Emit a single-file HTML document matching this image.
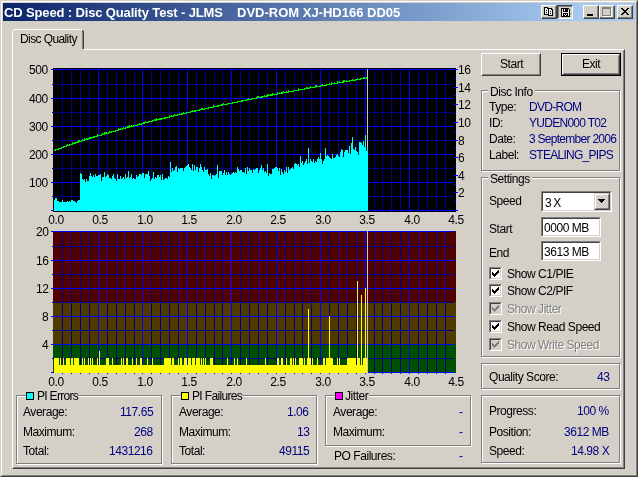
<!DOCTYPE html><html><head><meta charset="utf-8"><style>html,body{margin:0;padding:0;width:638px;height:477px;overflow:hidden;background:#D4D0C8;}body{position:relative;font-family:"Liberation Sans",sans-serif;font-size:12px;letter-spacing:-0.45px;}.t{position:absolute;white-space:nowrap;line-height:12px;will-change:transform;}.box{position:absolute;box-sizing:border-box;}</style></head><body><div class="box" style="left:0px;top:0px;width:638px;height:477px;border-style:solid;border-width:1px;border-color:#D4D0C8 #404040 #404040 #D4D0C8"><div class="box" style="left:0;top:0;width:636px;height:475px;border-style:solid;border-width:1px;border-color:#FFFFFF #808080 #808080 #FFFFFF"></div></div><div class="box" style="left:3px;top:3px;width:632px;height:18px;background:linear-gradient(to right,#0A246A 0px,#A6CAF0 580px,#A6CAF0 632px)"></div><div class="t" style="left:4px;top:6px;color:#fff;font-weight:bold;font-size:13px;line-height:13px;letter-spacing:-0.14px">CD Speed : Disc Quality Test - JLMS</div><div class="t" style="left:237px;top:6px;color:#fff;font-weight:bold;font-size:13px;line-height:13px;letter-spacing:0px">DVD-ROM XJ-HD166 DD05</div><div class="box" style="left:541px;top:5px;width:16px;height:14px;background:#D4D0C8;border-style:solid;border-width:1px;border-color:#FFFFFF #404040 #404040 #FFFFFF"><div class="box" style="left:0;top:0;width:14px;height:12px;border-style:solid;border-width:0 1px 1px 0;border-color:#808080"></div><svg width="16" height="14" style="position:absolute;left:-1px;top:-1px" shape-rendering="crispEdges"><rect x="3" y="2" width="5" height="8" fill="#000"/><rect x="4" y="3" width="3" height="6" fill="#F4F4F4"/><rect x="7" y="2" width="1" height="1" fill="#D4D0C8"/><rect x="6" y="3" width="1" height="1" fill="#000"/><rect x="5" y="5" width="1" height="1" fill="#000"/><rect x="5" y="7" width="1" height="1" fill="#000"/><rect x="7" y="3" width="5" height="8" fill="#000"/><rect x="8" y="4" width="3" height="6" fill="#F4F4F4"/><rect x="11" y="3" width="1" height="1" fill="#D4D0C8"/><rect x="10" y="4" width="1" height="1" fill="#000"/><rect x="9" y="6" width="1" height="1" fill="#000"/><rect x="9" y="8" width="1" height="1" fill="#000"/></svg></div><div class="box" style="left:557px;top:5px;width:16px;height:14px;background:#D4D0C8;border-style:solid;border-width:1px;border-color:#404040 #FFFFFF #FFFFFF #404040"><div class="box" style="left:0;top:0;width:14px;height:12px;border-style:solid;border-width:1px 0 0 1px;border-color:#808080"></div><svg width="16" height="14" style="position:absolute;left:-1px;top:-1px" shape-rendering="crispEdges"><rect x="4" y="3" width="9" height="9" fill="#000"/><rect x="12" y="3" width="1" height="1" fill="#D4D0C8"/><rect x="5" y="4" width="1" height="7" fill="#F4F4F4"/><rect x="11" y="4" width="1" height="7" fill="#F4F4F4"/><rect x="5" y="7" width="7" height="1" fill="#F4F4F4"/><rect x="7" y="4" width="1" height="2" fill="#F4F4F4"/><rect x="7" y="9" width="1" height="1" fill="#F4F4F4"/><rect x="8" y="10" width="1" height="1" fill="#F4F4F4"/><rect x="9" y="9" width="1" height="1" fill="#F4F4F4"/></svg></div><div class="box" style="left:583px;top:5px;width:16px;height:14px;background:#D4D0C8;border-style:solid;border-width:1px;border-color:#FFFFFF #404040 #404040 #FFFFFF"><div class="box" style="left:0;top:0;width:14px;height:12px;border-style:solid;border-width:0 1px 1px 0;border-color:#808080"></div><svg width="16" height="14" style="position:absolute;left:-1px;top:-1px" shape-rendering="crispEdges"><rect x="4" y="9" width="6" height="2" fill="#000"/></svg></div><div class="box" style="left:599px;top:5px;width:16px;height:14px;background:#D4D0C8;border-style:solid;border-width:1px;border-color:#FFFFFF #404040 #404040 #FFFFFF"><div class="box" style="left:0;top:0;width:14px;height:12px;border-style:solid;border-width:0 1px 1px 0;border-color:#808080"></div><svg width="16" height="14" style="position:absolute;left:-1px;top:-1px" shape-rendering="crispEdges"><rect x="3" y="2" width="9" height="9" fill="#808080"/><rect x="4" y="4" width="7" height="6" fill="#D4D0C8"/><rect x="4" y="11" width="9" height="1" fill="#FFFFFF"/><rect x="12" y="3" width="1" height="9" fill="#FFFFFF"/></svg></div><div class="box" style="left:617px;top:5px;width:16px;height:14px;background:#D4D0C8;border-style:solid;border-width:1px;border-color:#FFFFFF #404040 #404040 #FFFFFF"><div class="box" style="left:0;top:0;width:14px;height:12px;border-style:solid;border-width:0 1px 1px 0;border-color:#808080"></div><svg width="16" height="14" style="position:absolute;left:-1px;top:-1px" shape-rendering="crispEdges"><path d="M4 3h2v1h1v1h2V4h1V3h2v1h-1v1h-1v1h-1v1h1v1h1v1h1v1h-2V9h-1V8H7v1H6v1H4V9h1V8h1V7h1V6H6V5H5V4H4z" fill="#000"/></svg></div><div class="box" style="left:12px;top:49px;width:613px;height:420px;border-style:solid;border-width:1px;border-color:#FFFFFF #404040 #404040 #FFFFFF"><div class="box" style="left:0;top:0;width:611px;height:418px;border-style:solid;border-width:1px;border-color:#D4D0C8 #808080 #808080 #D4D0C8"></div></div><div class="box" style="left:12px;top:29px;width:72px;height:21px;background:#D4D0C8"></div><div class="box" style="left:14px;top:29px;width:68px;height:1px;background:#FFFFFF"></div><div class="box" style="left:13px;top:30px;width:1px;height:1px;background:#FFFFFF"></div><div class="box" style="left:12px;top:31px;width:1px;height:19px;background:#FFFFFF"></div><div class="box" style="left:82px;top:31px;width:1px;height:18px;background:#808080"></div><div class="box" style="left:83px;top:31px;width:1px;height:18px;background:#404040"></div><div class="box" style="left:82px;top:30px;width:1px;height:1px;background:#404040"></div><div class="t" style="left:20px;top:33px;color:#000;letter-spacing:-0.6px">Disc Quality</div><svg width="638" height="477" style="position:absolute;left:0;top:0" shape-rendering="crispEdges"><rect x="53" y="68" width="403" height="144" fill="#000000"/><rect x="62" y="69" width="1" height="143" fill="#000088"/><rect x="71" y="69" width="1" height="143" fill="#000088"/><rect x="80" y="69" width="1" height="143" fill="#000088"/><rect x="89" y="69" width="1" height="143" fill="#000088"/><rect x="98" y="69" width="1" height="143" fill="#0000FF"/><rect x="107" y="69" width="1" height="143" fill="#000088"/><rect x="116" y="69" width="1" height="143" fill="#000088"/><rect x="125" y="69" width="1" height="143" fill="#000088"/><rect x="134" y="69" width="1" height="143" fill="#000088"/><rect x="142" y="69" width="1" height="143" fill="#0000FF"/><rect x="151" y="69" width="1" height="143" fill="#000088"/><rect x="160" y="69" width="1" height="143" fill="#000088"/><rect x="169" y="69" width="1" height="143" fill="#000088"/><rect x="178" y="69" width="1" height="143" fill="#000088"/><rect x="187" y="69" width="1" height="143" fill="#0000FF"/><rect x="196" y="69" width="1" height="143" fill="#000088"/><rect x="205" y="69" width="1" height="143" fill="#000088"/><rect x="214" y="69" width="1" height="143" fill="#000088"/><rect x="222" y="69" width="1" height="143" fill="#000088"/><rect x="231" y="69" width="1" height="143" fill="#0000FF"/><rect x="240" y="69" width="1" height="143" fill="#000088"/><rect x="249" y="69" width="1" height="143" fill="#000088"/><rect x="258" y="69" width="1" height="143" fill="#000088"/><rect x="267" y="69" width="1" height="143" fill="#000088"/><rect x="276" y="69" width="1" height="143" fill="#0000FF"/><rect x="285" y="69" width="1" height="143" fill="#000088"/><rect x="294" y="69" width="1" height="143" fill="#000088"/><rect x="302" y="69" width="1" height="143" fill="#000088"/><rect x="311" y="69" width="1" height="143" fill="#000088"/><rect x="320" y="69" width="1" height="143" fill="#0000FF"/><rect x="329" y="69" width="1" height="143" fill="#000088"/><rect x="338" y="69" width="1" height="143" fill="#000088"/><rect x="347" y="69" width="1" height="143" fill="#000088"/><rect x="356" y="69" width="1" height="143" fill="#000088"/><rect x="365" y="69" width="1" height="143" fill="#0000FF"/><rect x="374" y="69" width="1" height="143" fill="#000088"/><rect x="382" y="69" width="1" height="143" fill="#000088"/><rect x="391" y="69" width="1" height="143" fill="#000088"/><rect x="400" y="69" width="1" height="143" fill="#000088"/><rect x="409" y="69" width="1" height="143" fill="#0000FF"/><rect x="418" y="69" width="1" height="143" fill="#000088"/><rect x="427" y="69" width="1" height="143" fill="#000088"/><rect x="436" y="69" width="1" height="143" fill="#000088"/><rect x="445" y="69" width="1" height="143" fill="#000088"/><rect x="51" y="210" width="403" height="1" fill="#0000FF"/><rect x="52" y="196" width="402" height="1" fill="#000088"/><rect x="51" y="182" width="403" height="1" fill="#0000FF"/><rect x="52" y="168" width="402" height="1" fill="#000088"/><rect x="51" y="154" width="403" height="1" fill="#0000FF"/><rect x="52" y="140" width="402" height="1" fill="#000088"/><rect x="51" y="126" width="403" height="1" fill="#0000FF"/><rect x="52" y="112" width="402" height="1" fill="#000088"/><rect x="51" y="98" width="403" height="1" fill="#0000FF"/><rect x="52" y="84" width="402" height="1" fill="#000088"/><rect x="51" y="69" width="403" height="1" fill="#0000FF"/><rect x="454" y="210" width="4" height="1" fill="#0000FF"/><rect x="454" y="201" width="2" height="1" fill="#0000FF"/><rect x="454" y="192" width="4" height="1" fill="#0000FF"/><rect x="454" y="184" width="2" height="1" fill="#0000FF"/><rect x="454" y="175" width="4" height="1" fill="#0000FF"/><rect x="454" y="166" width="2" height="1" fill="#0000FF"/><rect x="454" y="157" width="4" height="1" fill="#0000FF"/><rect x="454" y="148" width="2" height="1" fill="#0000FF"/><rect x="454" y="140" width="4" height="1" fill="#0000FF"/><rect x="454" y="131" width="2" height="1" fill="#0000FF"/><rect x="454" y="122" width="4" height="1" fill="#0000FF"/><rect x="454" y="113" width="2" height="1" fill="#0000FF"/><rect x="454" y="104" width="4" height="1" fill="#0000FF"/><rect x="454" y="95" width="2" height="1" fill="#0000FF"/><rect x="454" y="87" width="4" height="1" fill="#0000FF"/><rect x="454" y="78" width="2" height="1" fill="#0000FF"/><rect x="454" y="69" width="4" height="1" fill="#0000FF"/><path d="M54 200h1V211h-1zM55 198h1V211h-1zM56 198h1V211h-1zM57 201h1V211h-1zM58 201h1V211h-1zM59 202h1V211h-1zM60 202h1V211h-1zM61 202h1V211h-1zM62 200h1V211h-1zM63 202h1V211h-1zM64 202h1V211h-1zM65 202h1V211h-1zM66 202h1V211h-1zM67 201h1V211h-1zM68 202h1V211h-1zM69 201h1V211h-1zM70 202h1V211h-1zM71 200h1V211h-1zM72 200h1V211h-1zM73 201h1V211h-1zM74 201h1V211h-1zM75 202h1V211h-1zM76 203h1V211h-1zM77 201h1V211h-1zM78 200h1V211h-1zM79 200h1V211h-1zM80 173h1V211h-1zM81 174h1V211h-1zM82 179h1V211h-1zM83 180h1V211h-1zM84 179h1V211h-1zM85 182h1V211h-1zM86 179h1V211h-1zM87 181h1V211h-1zM88 181h1V211h-1zM89 176h1V211h-1zM90 173h1V211h-1zM91 176h1V211h-1zM92 177h1V211h-1zM93 175h1V211h-1zM94 177h1V211h-1zM95 174h1V211h-1zM96 176h1V211h-1zM97 176h1V211h-1zM98 175h1V211h-1zM99 175h1V211h-1zM100 174h1V211h-1zM101 181h1V211h-1zM102 177h1V211h-1zM103 177h1V211h-1zM104 172h1V211h-1zM105 177h1V211h-1zM106 176h1V211h-1zM107 174h1V211h-1zM108 175h1V211h-1zM109 178h1V211h-1zM110 178h1V211h-1zM111 179h1V211h-1zM112 176h1V211h-1zM113 174h1V211h-1zM114 178h1V211h-1zM115 179h1V211h-1zM116 181h1V211h-1zM117 174h1V211h-1zM118 179h1V211h-1zM119 179h1V211h-1zM120 176h1V211h-1zM121 179h1V211h-1zM122 178h1V211h-1zM123 177h1V211h-1zM124 179h1V211h-1zM125 174h1V211h-1zM126 178h1V211h-1zM127 177h1V211h-1zM128 171h1V211h-1zM129 178h1V211h-1zM130 177h1V211h-1zM131 174h1V211h-1zM132 179h1V211h-1zM133 178h1V211h-1zM134 179h1V211h-1zM135 179h1V211h-1zM136 175h1V211h-1zM137 177h1V211h-1zM138 176h1V211h-1zM139 174h1V211h-1zM140 174h1V211h-1zM141 175h1V211h-1zM142 173h1V211h-1zM143 173h1V211h-1zM144 178h1V211h-1zM145 174h1V211h-1zM146 174h1V211h-1zM147 174h1V211h-1zM148 171h1V211h-1zM149 176h1V211h-1zM150 181h1V211h-1zM151 179h1V211h-1zM152 178h1V211h-1zM153 172h1V211h-1zM154 179h1V211h-1zM155 177h1V211h-1zM156 178h1V211h-1zM157 175h1V211h-1zM158 175h1V211h-1zM159 177h1V211h-1zM160 175h1V211h-1zM161 180h1V211h-1zM162 174h1V211h-1zM163 180h1V211h-1zM164 179h1V211h-1zM165 178h1V211h-1zM166 178h1V211h-1zM167 179h1V211h-1zM168 176h1V211h-1zM169 177h1V211h-1zM170 162h1V211h-1zM171 172h1V211h-1zM172 168h1V211h-1zM173 171h1V211h-1zM174 170h1V211h-1zM175 167h1V211h-1zM176 166h1V211h-1zM177 172h1V211h-1zM178 168h1V211h-1zM179 169h1V211h-1zM180 168h1V211h-1zM181 168h1V211h-1zM182 168h1V211h-1zM183 171h1V211h-1zM184 168h1V211h-1zM185 167h1V211h-1zM186 166h1V211h-1zM187 165h1V211h-1zM188 164h1V211h-1zM189 167h1V211h-1zM190 168h1V211h-1zM191 170h1V211h-1zM192 164h1V211h-1zM193 171h1V211h-1zM194 165h1V211h-1zM195 170h1V211h-1zM196 167h1V211h-1zM197 167h1V211h-1zM198 172h1V211h-1zM199 168h1V211h-1zM200 164h1V211h-1zM201 167h1V211h-1zM202 170h1V211h-1zM203 172h1V211h-1zM204 167h1V211h-1zM205 170h1V211h-1zM206 170h1V211h-1zM207 169h1V211h-1zM208 174h1V211h-1zM209 176h1V211h-1zM210 173h1V211h-1zM211 179h1V211h-1zM212 175h1V211h-1zM213 175h1V211h-1zM214 176h1V211h-1zM215 175h1V211h-1zM216 174h1V211h-1zM217 165h1V211h-1zM218 178h1V211h-1zM219 171h1V211h-1zM220 171h1V211h-1zM221 171h1V211h-1zM222 175h1V211h-1zM223 173h1V211h-1zM224 170h1V211h-1zM225 175h1V211h-1zM226 172h1V211h-1zM227 175h1V211h-1zM228 172h1V211h-1zM229 174h1V211h-1zM230 175h1V211h-1zM231 174h1V211h-1zM232 173h1V211h-1zM233 172h1V211h-1zM234 173h1V211h-1zM235 172h1V211h-1zM236 173h1V211h-1zM237 167h1V211h-1zM238 169h1V211h-1zM239 171h1V211h-1zM240 170h1V211h-1zM241 170h1V211h-1zM242 172h1V211h-1zM243 172h1V211h-1zM244 173h1V211h-1zM245 168h1V211h-1zM246 174h1V211h-1zM247 167h1V211h-1zM248 171h1V211h-1zM249 168h1V211h-1zM250 170h1V211h-1zM251 170h1V211h-1zM252 173h1V211h-1zM253 169h1V211h-1zM254 170h1V211h-1zM255 169h1V211h-1zM256 168h1V211h-1zM257 168h1V211h-1zM258 173h1V211h-1zM259 170h1V211h-1zM260 168h1V211h-1zM261 165h1V211h-1zM262 170h1V211h-1zM263 168h1V211h-1zM264 172h1V211h-1zM265 171h1V211h-1zM266 173h1V211h-1zM267 164h1V211h-1zM268 176h1V211h-1zM269 173h1V211h-1zM270 174h1V211h-1zM271 174h1V211h-1zM272 169h1V211h-1zM273 169h1V211h-1zM274 168h1V211h-1zM275 167h1V211h-1zM276 167h1V211h-1zM277 168h1V211h-1zM278 171h1V211h-1zM279 168h1V211h-1zM280 175h1V211h-1zM281 169h1V211h-1zM282 172h1V211h-1zM283 174h1V211h-1zM284 170h1V211h-1zM285 172h1V211h-1zM286 167h1V211h-1zM287 173h1V211h-1zM288 167h1V211h-1zM289 170h1V211h-1zM290 169h1V211h-1zM291 168h1V211h-1zM292 167h1V211h-1zM293 169h1V211h-1zM294 164h1V211h-1zM295 163h1V211h-1zM296 164h1V211h-1zM297 165h1V211h-1zM298 164h1V211h-1zM299 167h1V211h-1zM300 156h1V211h-1zM301 163h1V211h-1zM302 161h1V211h-1zM303 165h1V211h-1zM304 163h1V211h-1zM305 161h1V211h-1zM306 159h1V211h-1zM307 164h1V211h-1zM308 148h1V211h-1zM309 163h1V211h-1zM310 159h1V211h-1zM311 161h1V211h-1zM312 162h1V211h-1zM313 159h1V211h-1zM314 163h1V211h-1zM315 161h1V211h-1zM316 162h1V211h-1zM317 159h1V211h-1zM318 157h1V211h-1zM319 159h1V211h-1zM320 153h1V211h-1zM321 159h1V211h-1zM322 164h1V211h-1zM323 161h1V211h-1zM324 159h1V211h-1zM325 148h1V211h-1zM326 156h1V211h-1zM327 155h1V211h-1zM328 156h1V211h-1zM329 157h1V211h-1zM330 158h1V211h-1zM331 159h1V211h-1zM332 154h1V211h-1zM333 158h1V211h-1zM334 158h1V211h-1zM335 157h1V211h-1zM336 155h1V211h-1zM337 154h1V211h-1zM338 156h1V211h-1zM339 157h1V211h-1zM340 152h1V211h-1zM341 149h1V211h-1zM342 150h1V211h-1zM343 157h1V211h-1zM344 152h1V211h-1zM345 150h1V211h-1zM346 150h1V211h-1zM347 150h1V211h-1zM348 153h1V211h-1zM349 146h1V211h-1zM350 154h1V211h-1zM351 143h1V211h-1zM352 137h1V211h-1zM353 149h1V211h-1zM354 150h1V211h-1zM355 147h1V211h-1zM356 151h1V211h-1zM357 152h1V211h-1zM358 155h1V211h-1zM359 142h1V211h-1zM360 142h1V211h-1zM361 143h1V211h-1zM362 145h1V211h-1zM363 141h1V211h-1zM364 147h1V211h-1zM365 135h1V211h-1zM366 151h1V211h-1zM367 147h1V211h-1z" fill="#00FFFF"/><path d="M54 150h1V151h-1zM55 149h1V151h-1zM56 149h1V150h-1zM57 149h1V150h-1zM58 148h1V150h-1zM59 148h1V149h-1zM60 148h1V149h-1zM61 147h1V149h-1zM62 147h1V148h-1zM63 146h1V148h-1zM64 146h1V147h-1zM65 146h1V147h-1zM66 145h1V147h-1zM67 144h1V146h-1zM68 145h1V146h-1zM69 144h1V146h-1zM70 144h1V145h-1zM71 144h1V145h-1zM72 142h1V145h-1zM73 143h1V144h-1zM74 142h1V144h-1zM75 142h1V144h-1zM76 142h1V143h-1zM77 141h1V143h-1zM78 140h1V143h-1zM79 140h1V142h-1zM80 141h1V142h-1zM81 140h1V142h-1zM82 139h1V141h-1zM83 140h1V141h-1zM84 138h1V141h-1zM85 139h1V140h-1zM86 138h1V140h-1zM87 138h1V140h-1zM88 138h1V140h-1zM89 137h1V139h-1zM90 137h1V139h-1zM91 137h1V139h-1zM92 137h1V138h-1zM93 136h1V138h-1zM94 136h1V138h-1zM95 136h1V137h-1zM96 136h1V137h-1zM97 134h1V137h-1zM98 135h1V136h-1zM99 135h1V136h-1zM100 135h1V136h-1zM101 134h1V136h-1zM102 133h1V135h-1zM103 134h1V135h-1zM104 132h1V135h-1zM105 132h1V134h-1zM106 132h1V134h-1zM107 133h1V134h-1zM108 132h1V134h-1zM109 131h1V133h-1zM110 132h1V133h-1zM111 131h1V133h-1zM112 131h1V132h-1zM113 131h1V132h-1zM114 131h1V132h-1zM115 130h1V132h-1zM116 130h1V131h-1zM117 130h1V131h-1zM118 128h1V131h-1zM119 129h1V130h-1zM120 128h1V130h-1zM121 129h1V130h-1zM122 128h1V130h-1zM123 127h1V129h-1zM124 128h1V129h-1zM125 127h1V129h-1zM126 127h1V128h-1zM127 126h1V128h-1zM128 126h1V128h-1zM129 125h1V128h-1zM130 126h1V127h-1zM131 125h1V127h-1zM132 126h1V127h-1zM133 125h1V127h-1zM134 125h1V126h-1zM135 125h1V126h-1zM136 125h1V126h-1zM137 124h1V126h-1zM138 124h1V125h-1zM139 123h1V125h-1zM140 124h1V125h-1zM141 123h1V125h-1zM142 123h1V124h-1zM143 122h1V124h-1zM144 122h1V124h-1zM145 121h1V123h-1zM146 122h1V123h-1zM147 122h1V123h-1zM148 121h1V123h-1zM149 121h1V122h-1zM150 121h1V122h-1zM151 121h1V122h-1zM152 120h1V122h-1zM153 120h1V121h-1zM154 119h1V121h-1zM155 119h1V121h-1zM156 118h1V121h-1zM157 119h1V120h-1zM158 119h1V120h-1zM159 118h1V120h-1zM160 118h1V120h-1zM161 118h1V120h-1zM162 118h1V119h-1zM163 118h1V119h-1zM164 117h1V119h-1zM165 117h1V119h-1zM166 117h1V118h-1zM167 117h1V118h-1zM168 117h1V118h-1zM169 115h1V118h-1zM170 116h1V117h-1zM171 115h1V117h-1zM172 116h1V117h-1zM173 115h1V117h-1zM174 114h1V116h-1zM175 115h1V116h-1zM176 115h1V116h-1zM177 114h1V116h-1zM178 114h1V115h-1zM179 113h1V115h-1zM180 114h1V115h-1zM181 113h1V115h-1zM182 113h1V115h-1zM183 112h1V114h-1zM184 113h1V114h-1zM185 113h1V114h-1zM186 112h1V114h-1zM187 112h1V113h-1zM188 112h1V113h-1zM189 112h1V113h-1zM190 111h1V113h-1zM191 111h1V112h-1zM192 110h1V112h-1zM193 111h1V112h-1zM194 110h1V112h-1zM195 110h1V112h-1zM196 110h1V111h-1zM197 110h1V111h-1zM198 110h1V111h-1zM199 109h1V111h-1zM200 109h1V110h-1zM201 108h1V110h-1zM202 108h1V110h-1zM203 109h1V110h-1zM204 108h1V110h-1zM205 108h1V109h-1zM206 108h1V109h-1zM207 108h1V109h-1zM208 107h1V109h-1zM209 107h1V108h-1zM210 107h1V108h-1zM211 107h1V108h-1zM212 107h1V108h-1zM213 105h1V108h-1zM214 106h1V107h-1zM215 106h1V107h-1zM216 106h1V107h-1zM217 105h1V107h-1zM218 105h1V107h-1zM219 105h1V106h-1zM220 105h1V106h-1zM221 104h1V106h-1zM222 104h1V106h-1zM223 103h1V105h-1zM224 104h1V105h-1zM225 104h1V105h-1zM226 104h1V105h-1zM227 103h1V105h-1zM228 103h1V104h-1zM229 103h1V104h-1zM230 103h1V104h-1zM231 103h1V104h-1zM232 102h1V104h-1zM233 102h1V103h-1zM234 102h1V103h-1zM235 102h1V103h-1zM236 102h1V103h-1zM237 101h1V103h-1zM238 101h1V102h-1zM239 101h1V102h-1zM240 101h1V102h-1zM241 100h1V102h-1zM242 100h1V102h-1zM243 100h1V101h-1zM244 100h1V101h-1zM245 100h1V101h-1zM246 99h1V101h-1zM247 99h1V100h-1zM248 98h1V100h-1zM249 99h1V100h-1zM250 99h1V100h-1zM251 98h1V100h-1zM252 98h1V99h-1zM253 98h1V99h-1zM254 98h1V99h-1zM255 98h1V99h-1zM256 97h1V99h-1zM257 96h1V98h-1zM258 96h1V98h-1zM259 97h1V98h-1zM260 97h1V98h-1zM261 96h1V98h-1zM262 96h1V98h-1zM263 96h1V97h-1zM264 95h1V97h-1zM265 96h1V97h-1zM266 95h1V97h-1zM267 94h1V97h-1zM268 94h1V96h-1zM269 95h1V96h-1zM270 94h1V96h-1zM271 94h1V96h-1zM272 93h1V96h-1zM273 94h1V95h-1zM274 94h1V95h-1zM275 94h1V95h-1zM276 94h1V95h-1zM277 92h1V95h-1zM278 93h1V94h-1zM279 92h1V94h-1zM280 93h1V94h-1zM281 92h1V94h-1zM282 92h1V94h-1zM283 91h1V93h-1zM284 92h1V93h-1zM285 92h1V93h-1zM286 91h1V93h-1zM287 92h1V93h-1zM288 90h1V93h-1zM289 91h1V92h-1zM290 91h1V92h-1zM291 91h1V92h-1zM292 91h1V92h-1zM293 90h1V92h-1zM294 90h1V91h-1zM295 90h1V91h-1zM296 90h1V91h-1zM297 90h1V91h-1zM298 88h1V91h-1zM299 89h1V90h-1zM300 89h1V90h-1zM301 89h1V90h-1zM302 89h1V90h-1zM303 89h1V90h-1zM304 88h1V90h-1zM305 88h1V89h-1zM306 87h1V89h-1zM307 87h1V89h-1zM308 88h1V89h-1zM309 87h1V89h-1zM310 86h1V88h-1zM311 87h1V88h-1zM312 87h1V88h-1zM313 87h1V88h-1zM314 87h1V88h-1zM315 85h1V88h-1zM316 85h1V87h-1zM317 86h1V87h-1zM318 86h1V87h-1zM319 86h1V87h-1zM320 85h1V87h-1zM321 85h1V86h-1zM322 84h1V86h-1zM323 85h1V86h-1zM324 85h1V86h-1zM325 85h1V86h-1zM326 84h1V86h-1zM327 84h1V85h-1zM328 84h1V85h-1zM329 83h1V85h-1zM330 84h1V85h-1zM331 82h1V85h-1zM332 83h1V84h-1zM333 83h1V84h-1zM334 82h1V84h-1zM335 83h1V84h-1zM336 83h1V84h-1zM337 81h1V84h-1zM338 82h1V83h-1zM339 81h1V83h-1zM340 82h1V83h-1zM341 82h1V83h-1zM342 81h1V83h-1zM343 80h1V83h-1zM344 80h1V82h-1zM345 81h1V82h-1zM346 80h1V82h-1zM347 81h1V82h-1zM348 81h1V82h-1zM349 80h1V82h-1zM350 80h1V81h-1zM351 80h1V81h-1zM352 79h1V81h-1zM353 80h1V81h-1zM354 80h1V81h-1zM355 79h1V81h-1zM356 79h1V80h-1zM357 78h1V80h-1zM358 79h1V80h-1zM359 79h1V80h-1zM360 78h1V80h-1zM361 78h1V79h-1zM362 78h1V79h-1zM363 77h1V79h-1zM364 77h1V79h-1zM365 78h1V79h-1zM366 77h1V79h-1z" fill="#00F000"/><rect x="367" y="69" width="1" height="78" fill="#C8C8C8"/><rect x="53" y="231" width="403" height="71" fill="#500000"/><rect x="53" y="302" width="403" height="42" fill="#503A00"/><rect x="53" y="344" width="403" height="29" fill="#005000"/><rect x="62" y="231" width="1" height="143" fill="#000088"/><rect x="71" y="231" width="1" height="143" fill="#000088"/><rect x="80" y="231" width="1" height="143" fill="#000088"/><rect x="89" y="231" width="1" height="143" fill="#000088"/><rect x="98" y="231" width="1" height="143" fill="#0000FF"/><rect x="107" y="231" width="1" height="143" fill="#000088"/><rect x="116" y="231" width="1" height="143" fill="#000088"/><rect x="125" y="231" width="1" height="143" fill="#000088"/><rect x="134" y="231" width="1" height="143" fill="#000088"/><rect x="142" y="231" width="1" height="143" fill="#0000FF"/><rect x="151" y="231" width="1" height="143" fill="#000088"/><rect x="160" y="231" width="1" height="143" fill="#000088"/><rect x="169" y="231" width="1" height="143" fill="#000088"/><rect x="178" y="231" width="1" height="143" fill="#000088"/><rect x="187" y="231" width="1" height="143" fill="#0000FF"/><rect x="196" y="231" width="1" height="143" fill="#000088"/><rect x="205" y="231" width="1" height="143" fill="#000088"/><rect x="214" y="231" width="1" height="143" fill="#000088"/><rect x="222" y="231" width="1" height="143" fill="#000088"/><rect x="231" y="231" width="1" height="143" fill="#0000FF"/><rect x="240" y="231" width="1" height="143" fill="#000088"/><rect x="249" y="231" width="1" height="143" fill="#000088"/><rect x="258" y="231" width="1" height="143" fill="#000088"/><rect x="267" y="231" width="1" height="143" fill="#000088"/><rect x="276" y="231" width="1" height="143" fill="#0000FF"/><rect x="285" y="231" width="1" height="143" fill="#000088"/><rect x="294" y="231" width="1" height="143" fill="#000088"/><rect x="302" y="231" width="1" height="143" fill="#000088"/><rect x="311" y="231" width="1" height="143" fill="#000088"/><rect x="320" y="231" width="1" height="143" fill="#0000FF"/><rect x="329" y="231" width="1" height="143" fill="#000088"/><rect x="338" y="231" width="1" height="143" fill="#000088"/><rect x="347" y="231" width="1" height="143" fill="#000088"/><rect x="356" y="231" width="1" height="143" fill="#000088"/><rect x="365" y="231" width="1" height="143" fill="#0000FF"/><rect x="374" y="231" width="1" height="143" fill="#000088"/><rect x="382" y="231" width="1" height="143" fill="#000088"/><rect x="391" y="231" width="1" height="143" fill="#000088"/><rect x="400" y="231" width="1" height="143" fill="#000088"/><rect x="409" y="231" width="1" height="143" fill="#0000FF"/><rect x="418" y="231" width="1" height="143" fill="#000088"/><rect x="427" y="231" width="1" height="143" fill="#000088"/><rect x="436" y="231" width="1" height="143" fill="#000088"/><rect x="445" y="231" width="1" height="143" fill="#000088"/><rect x="51" y="372" width="403" height="1" fill="#0000FF"/><rect x="52" y="358" width="402" height="1" fill="#000088"/><rect x="51" y="344" width="403" height="1" fill="#0000FF"/><rect x="52" y="330" width="402" height="1" fill="#000088"/><rect x="51" y="316" width="403" height="1" fill="#0000FF"/><rect x="52" y="302" width="402" height="1" fill="#000088"/><rect x="51" y="288" width="403" height="1" fill="#0000FF"/><rect x="52" y="274" width="402" height="1" fill="#000088"/><rect x="51" y="260" width="403" height="1" fill="#0000FF"/><rect x="52" y="246" width="402" height="1" fill="#000088"/><rect x="51" y="231" width="403" height="1" fill="#0000FF"/><path d="M54 358h1V373h-1zM55 358h1V373h-1zM56 358h1V373h-1zM57 358h1V373h-1zM58 358h1V373h-1zM59 365h1V373h-1zM60 358h1V373h-1zM61 365h1V373h-1zM62 365h1V373h-1zM63 358h1V373h-1zM64 365h1V373h-1zM65 365h1V373h-1zM66 358h1V373h-1zM67 358h1V373h-1zM68 358h1V373h-1zM69 358h1V373h-1zM70 365h1V373h-1zM71 358h1V373h-1zM72 358h1V373h-1zM73 365h1V373h-1zM74 358h1V373h-1zM75 358h1V373h-1zM76 358h1V373h-1zM77 358h1V373h-1zM78 358h1V373h-1zM79 365h1V373h-1zM80 365h1V373h-1zM81 365h1V373h-1zM82 358h1V373h-1zM83 365h1V373h-1zM84 358h1V373h-1zM85 365h1V373h-1zM86 365h1V373h-1zM87 365h1V373h-1zM88 358h1V373h-1zM89 365h1V373h-1zM90 358h1V373h-1zM91 365h1V373h-1zM92 358h1V373h-1zM93 365h1V373h-1zM94 365h1V373h-1zM95 365h1V373h-1zM96 365h1V373h-1zM97 358h1V373h-1zM98 365h1V373h-1zM99 351h1V373h-1zM100 365h1V373h-1zM101 365h1V373h-1zM102 365h1V373h-1zM103 365h1V373h-1zM104 365h1V373h-1zM105 365h1V373h-1zM106 358h1V373h-1zM107 358h1V373h-1zM108 358h1V373h-1zM109 365h1V373h-1zM110 365h1V373h-1zM111 365h1V373h-1zM112 358h1V373h-1zM113 365h1V373h-1zM114 365h1V373h-1zM115 365h1V373h-1zM116 365h1V373h-1zM117 365h1V373h-1zM118 365h1V373h-1zM119 365h1V373h-1zM120 365h1V373h-1zM121 358h1V373h-1zM122 365h1V373h-1zM123 358h1V373h-1zM124 365h1V373h-1zM125 365h1V373h-1zM126 358h1V373h-1zM127 358h1V373h-1zM128 365h1V373h-1zM129 365h1V373h-1zM130 365h1V373h-1zM131 365h1V373h-1zM132 358h1V373h-1zM133 365h1V373h-1zM134 365h1V373h-1zM135 365h1V373h-1zM136 358h1V373h-1zM137 365h1V373h-1zM138 365h1V373h-1zM139 365h1V373h-1zM140 358h1V373h-1zM141 358h1V373h-1zM142 365h1V373h-1zM143 365h1V373h-1zM144 365h1V373h-1zM145 365h1V373h-1zM146 365h1V373h-1zM147 358h1V373h-1zM148 365h1V373h-1zM149 365h1V373h-1zM150 365h1V373h-1zM151 365h1V373h-1zM152 358h1V373h-1zM153 365h1V373h-1zM154 365h1V373h-1zM155 365h1V373h-1zM156 365h1V373h-1zM157 365h1V373h-1zM158 365h1V373h-1zM159 365h1V373h-1zM160 365h1V373h-1zM161 365h1V373h-1zM162 365h1V373h-1zM163 365h1V373h-1zM164 358h1V373h-1zM165 358h1V373h-1zM166 358h1V373h-1zM167 358h1V373h-1zM168 358h1V373h-1zM169 358h1V373h-1zM170 358h1V373h-1zM171 365h1V373h-1zM172 358h1V373h-1zM173 358h1V373h-1zM174 365h1V373h-1zM175 365h1V373h-1zM176 365h1V373h-1zM177 365h1V373h-1zM178 358h1V373h-1zM179 365h1V373h-1zM180 358h1V373h-1zM181 358h1V373h-1zM182 365h1V373h-1zM183 365h1V373h-1zM184 358h1V373h-1zM185 358h1V373h-1zM186 358h1V373h-1zM187 365h1V373h-1zM188 358h1V373h-1zM189 358h1V373h-1zM190 358h1V373h-1zM191 365h1V373h-1zM192 358h1V373h-1zM193 358h1V373h-1zM194 358h1V373h-1zM195 365h1V373h-1zM196 358h1V373h-1zM197 358h1V373h-1zM198 358h1V373h-1zM199 358h1V373h-1zM200 365h1V373h-1zM201 358h1V373h-1zM202 365h1V373h-1zM203 358h1V373h-1zM204 365h1V373h-1zM205 358h1V373h-1zM206 365h1V373h-1zM207 365h1V373h-1zM208 365h1V373h-1zM209 365h1V373h-1zM210 358h1V373h-1zM211 358h1V373h-1zM212 358h1V373h-1zM213 365h1V373h-1zM214 365h1V373h-1zM215 365h1V373h-1zM216 365h1V373h-1zM217 365h1V373h-1zM218 365h1V373h-1zM219 365h1V373h-1zM220 365h1V373h-1zM221 365h1V373h-1zM222 365h1V373h-1zM223 365h1V373h-1zM224 365h1V373h-1zM225 365h1V373h-1zM226 365h1V373h-1zM227 358h1V373h-1zM228 365h1V373h-1zM229 365h1V373h-1zM230 365h1V373h-1zM231 365h1V373h-1zM232 365h1V373h-1zM233 365h1V373h-1zM234 358h1V373h-1zM235 365h1V373h-1zM236 365h1V373h-1zM237 358h1V373h-1zM238 365h1V373h-1zM239 365h1V373h-1zM240 365h1V373h-1zM241 365h1V373h-1zM242 365h1V373h-1zM243 365h1V373h-1zM244 365h1V373h-1zM245 365h1V373h-1zM246 358h1V373h-1zM247 365h1V373h-1zM248 365h1V373h-1zM249 365h1V373h-1zM250 365h1V373h-1zM251 365h1V373h-1zM252 365h1V373h-1zM253 365h1V373h-1zM254 365h1V373h-1zM255 365h1V373h-1zM256 365h1V373h-1zM257 365h1V373h-1zM258 365h1V373h-1zM259 365h1V373h-1zM260 365h1V373h-1zM261 365h1V373h-1zM262 365h1V373h-1zM263 365h1V373h-1zM264 365h1V373h-1zM265 358h1V373h-1zM266 365h1V373h-1zM267 365h1V373h-1zM268 365h1V373h-1zM269 365h1V373h-1zM270 365h1V373h-1zM271 365h1V373h-1zM272 365h1V373h-1zM273 365h1V373h-1zM274 365h1V373h-1zM275 365h1V373h-1zM276 365h1V373h-1zM277 358h1V373h-1zM278 358h1V373h-1zM279 365h1V373h-1zM280 365h1V373h-1zM281 358h1V373h-1zM282 358h1V373h-1zM283 365h1V373h-1zM284 365h1V373h-1zM285 365h1V373h-1zM286 358h1V373h-1zM287 365h1V373h-1zM288 365h1V373h-1zM289 365h1V373h-1zM290 358h1V373h-1zM291 358h1V373h-1zM292 365h1V373h-1zM293 358h1V373h-1zM294 365h1V373h-1zM295 358h1V373h-1zM296 365h1V373h-1zM297 365h1V373h-1zM298 365h1V373h-1zM299 358h1V373h-1zM300 358h1V373h-1zM301 358h1V373h-1zM302 358h1V373h-1zM303 365h1V373h-1zM304 358h1V373h-1zM305 365h1V373h-1zM306 365h1V373h-1zM307 358h1V373h-1zM308 309h1V373h-1zM309 358h1V373h-1zM310 358h1V373h-1zM311 365h1V373h-1zM312 358h1V373h-1zM313 365h1V373h-1zM314 365h1V373h-1zM315 365h1V373h-1zM316 365h1V373h-1zM317 358h1V373h-1zM318 365h1V373h-1zM319 365h1V373h-1zM320 365h1V373h-1zM321 365h1V373h-1zM322 365h1V373h-1zM323 358h1V373h-1zM324 358h1V373h-1zM325 365h1V373h-1zM326 358h1V373h-1zM327 358h1V373h-1zM328 358h1V373h-1zM329 316h1V373h-1zM330 358h1V373h-1zM331 358h1V373h-1zM332 358h1V373h-1zM333 365h1V373h-1zM334 365h1V373h-1zM335 365h1V373h-1zM336 365h1V373h-1zM337 358h1V373h-1zM338 365h1V373h-1zM339 358h1V373h-1zM340 365h1V373h-1zM341 365h1V373h-1zM342 365h1V373h-1zM343 365h1V373h-1zM344 365h1V373h-1zM345 365h1V373h-1zM346 365h1V373h-1zM347 358h1V373h-1zM348 358h1V373h-1zM349 358h1V373h-1zM350 358h1V373h-1zM351 358h1V373h-1zM352 358h1V373h-1zM353 358h1V373h-1zM354 358h1V373h-1zM355 358h1V373h-1zM356 365h1V373h-1zM357 281h1V373h-1zM358 358h1V373h-1zM359 358h1V373h-1zM360 365h1V373h-1zM361 295h1V373h-1zM362 365h1V373h-1zM363 358h1V373h-1zM364 358h1V373h-1zM365 288h1V373h-1zM366 358h1V373h-1z" fill="#FFFF00"/><rect x="367" y="231" width="1" height="142" fill="#C8C8C8"/></svg><div class="t" style="right:590px;top:64px;color:#000;text-align:right;">500</div><div class="t" style="right:590px;top:93px;color:#000;text-align:right;">400</div><div class="t" style="right:590px;top:121px;color:#000;text-align:right;">300</div><div class="t" style="right:590px;top:149px;color:#000;text-align:right;">200</div><div class="t" style="right:590px;top:177px;color:#000;text-align:right;">100</div><div class="t" style="right:590px;top:226px;color:#000;text-align:right;">20</div><div class="t" style="right:590px;top:255px;color:#000;text-align:right;">16</div><div class="t" style="right:590px;top:283px;color:#000;text-align:right;">12</div><div class="t" style="right:590px;top:311px;color:#000;text-align:right;">8</div><div class="t" style="right:590px;top:339px;color:#000;text-align:right;">4</div><div class="t" style="left:458px;top:64px;color:#000;">16</div><div class="t" style="left:458px;top:82px;color:#000;">14</div><div class="t" style="left:458px;top:99px;color:#000;">12</div><div class="t" style="left:458px;top:117px;color:#000;">10</div><div class="t" style="left:458px;top:135px;color:#000;">8</div><div class="t" style="left:458px;top:152px;color:#000;">6</div><div class="t" style="left:458px;top:170px;color:#000;">4</div><div class="t" style="left:458px;top:187px;color:#000;">2</div><div class="t" style="left:36.0px;width:40px;text-align:center;top:214px">0.0</div><div class="t" style="left:36.0px;width:40px;text-align:center;top:376px">0.0</div><div class="t" style="left:80.4px;width:40px;text-align:center;top:214px">0.5</div><div class="t" style="left:80.4px;width:40px;text-align:center;top:376px">0.5</div><div class="t" style="left:124.9px;width:40px;text-align:center;top:214px">1.0</div><div class="t" style="left:124.9px;width:40px;text-align:center;top:376px">1.0</div><div class="t" style="left:169.3px;width:40px;text-align:center;top:214px">1.5</div><div class="t" style="left:169.3px;width:40px;text-align:center;top:376px">1.5</div><div class="t" style="left:213.8px;width:40px;text-align:center;top:214px">2.0</div><div class="t" style="left:213.8px;width:40px;text-align:center;top:376px">2.0</div><div class="t" style="left:258.2px;width:40px;text-align:center;top:214px">2.5</div><div class="t" style="left:258.2px;width:40px;text-align:center;top:376px">2.5</div><div class="t" style="left:302.7px;width:40px;text-align:center;top:214px">3.0</div><div class="t" style="left:302.7px;width:40px;text-align:center;top:376px">3.0</div><div class="t" style="left:347.1px;width:40px;text-align:center;top:214px">3.5</div><div class="t" style="left:347.1px;width:40px;text-align:center;top:376px">3.5</div><div class="t" style="left:391.6px;width:40px;text-align:center;top:214px">4.0</div><div class="t" style="left:391.6px;width:40px;text-align:center;top:376px">4.0</div><div class="t" style="left:436.0px;width:40px;text-align:center;top:214px">4.5</div><div class="t" style="left:436.0px;width:40px;text-align:center;top:376px">4.5</div><div class="box" style="left:481px;top:53px;width:60px;height:23px;border-style:solid;border-width:1px;border-color:#FFFFFF #404040 #404040 #FFFFFF"><div class="box" style="left:0;top:0;width:58px;height:21px;border-style:solid;border-width:1px;border-color:#D4D0C8 #808080 #808080 #D4D0C8"></div></div><div class="t" style="left:500px;top:58px;color:#000;">Start</div><div class="box" style="left:561px;top:53px;width:60px;height:23px;border:1px solid #000"></div><div class="box" style="left:562px;top:54px;width:58px;height:21px;border-style:solid;border-width:1px;border-color:#FFFFFF #404040 #404040 #FFFFFF"><div class="box" style="left:0;top:0;width:56px;height:19px;border-style:solid;border-width:1px;border-color:#D4D0C8 #808080 #808080 #D4D0C8"></div></div><div class="t" style="left:582px;top:58px;color:#000;">Exit</div><div class="box" style="left:482px;top:91px;width:139px;height:81px;border:1px solid #FFFFFF"></div><div class="box" style="left:481px;top:90px;width:139px;height:81px;border:1px solid #808080"></div><div class="t" style="left:488px;top:86px;background:#D4D0C8;padding:0 2px 0 2px;color:#000">Disc Info</div><div class="t" style="left:489px;top:101px;color:#000;">Type:</div><div class="t" style="left:529px;top:101px;color:#000080;letter-spacing:-0.72px">DVD-ROM</div><div class="t" style="left:489px;top:117px;color:#000;">ID:</div><div class="t" style="left:529px;top:117px;color:#000080;letter-spacing:-0.72px">YUDEN000 T02</div><div class="t" style="left:489px;top:133px;color:#000;">Date:</div><div class="t" style="left:529px;top:133px;color:#000080;letter-spacing:-0.72px">3 September 2006</div><div class="t" style="left:489px;top:149px;color:#000;">Label:</div><div class="t" style="left:529px;top:149px;color:#000080;letter-spacing:-0.72px">STEALING_PIPS</div><div class="box" style="left:482px;top:178px;width:139px;height:180px;border:1px solid #FFFFFF"></div><div class="box" style="left:481px;top:177px;width:139px;height:180px;border:1px solid #808080"></div><div class="t" style="left:488px;top:173px;background:#D4D0C8;padding:0 2px 0 2px;color:#000">Settings</div><div class="t" style="left:489px;top:195px;color:#000;">Speed</div><div class="t" style="left:489px;top:223px;color:#000;">Start</div><div class="t" style="left:489px;top:247px;color:#000;">End</div><div class="box" style="left:541px;top:191px;width:71px;height:21px;background:#fff;border-style:solid;border-width:1px;border-color:#808080 #FFFFFF #FFFFFF #808080"><div class="box" style="left:0;top:0;width:69px;height:19px;border-style:solid;border-width:1px;border-color:#404040 #D4D0C8 #D4D0C8 #404040"></div></div><div class="box" style="left:594px;top:193px;width:16px;height:17px;background:#D4D0C8;border-style:solid;border-width:1px;border-color:#D4D0C8 #404040 #404040 #D4D0C8"><div class="box" style="left:0;top:0;width:14px;height:15px;border-style:solid;border-width:1px;border-color:#FFFFFF #808080 #808080 #FFFFFF"></div></div><svg width="16" height="17" style="position:absolute;left:594px;top:193px" shape-rendering="crispEdges"><path d="M4 6h7v1h-1v1h-1v1H8v1H7V9H6V8H5V7H4z" fill="#000"/></svg><div class="t" style="left:545px;top:197px;color:#000;">3&#x2009;X</div><div class="box" style="left:541px;top:217px;width:60px;height:20px;background:#fff;border-style:solid;border-width:1px;border-color:#808080 #FFFFFF #FFFFFF #808080"><div class="box" style="left:0;top:0;width:58px;height:18px;border-style:solid;border-width:1px;border-color:#404040 #D4D0C8 #D4D0C8 #404040"></div></div><div class="t" style="left:544px;top:222px;color:#000;">0000 MB</div><div class="box" style="left:541px;top:241px;width:60px;height:20px;background:#fff;border-style:solid;border-width:1px;border-color:#808080 #FFFFFF #FFFFFF #808080"><div class="box" style="left:0;top:0;width:58px;height:18px;border-style:solid;border-width:1px;border-color:#404040 #D4D0C8 #D4D0C8 #404040"></div></div><div class="t" style="left:544px;top:246px;color:#000;">3613 MB</div><div class="box" style="left:489px;top:267px;width:13px;height:13px;background:#fff;border-style:solid;border-width:1px;border-color:#808080 #FFFFFF #FFFFFF #808080"><div class="box" style="left:0;top:0;width:11px;height:11px;border-style:solid;border-width:1px;border-color:#404040 #D4D0C8 #D4D0C8 #404040"></div></div><svg width="13" height="13" style="position:absolute;left:489px;top:267px" shape-rendering="crispEdges"><path d="M3 5h1v1h1v1h1V6h1V5h1V4h1V3h1v3H9v1H8v1H7v1H6v1H5V9H4V8H3z" fill="#000"/></svg><div class="t" style="left:507px;top:268px;color:#000;">Show C1/PIE</div><div class="box" style="left:489px;top:284px;width:13px;height:13px;background:#fff;border-style:solid;border-width:1px;border-color:#808080 #FFFFFF #FFFFFF #808080"><div class="box" style="left:0;top:0;width:11px;height:11px;border-style:solid;border-width:1px;border-color:#404040 #D4D0C8 #D4D0C8 #404040"></div></div><svg width="13" height="13" style="position:absolute;left:489px;top:284px" shape-rendering="crispEdges"><path d="M3 5h1v1h1v1h1V6h1V5h1V4h1V3h1v3H9v1H8v1H7v1H6v1H5V9H4V8H3z" fill="#000"/></svg><div class="t" style="left:507px;top:285px;color:#000;">Show C2/PIF</div><div class="box" style="left:489px;top:302px;width:13px;height:13px;background:#D4D0C8;border-style:solid;border-width:1px;border-color:#808080 #FFFFFF #FFFFFF #808080"><div class="box" style="left:0;top:0;width:11px;height:11px;border-style:solid;border-width:1px;border-color:#404040 #D4D0C8 #D4D0C8 #404040"></div></div><svg width="13" height="13" style="position:absolute;left:489px;top:302px" shape-rendering="crispEdges"><path d="M3 5h1v1h1v1h1V6h1V5h1V4h1V3h1v3H9v1H8v1H7v1H6v1H5V9H4V8H3z" fill="#808080"/></svg><div class="t" style="left:508px;top:304px;color:#fff;">Show Jitter</div><div class="t" style="left:507px;top:303px;color:#808080;">Show Jitter</div><div class="box" style="left:489px;top:320px;width:13px;height:13px;background:#fff;border-style:solid;border-width:1px;border-color:#808080 #FFFFFF #FFFFFF #808080"><div class="box" style="left:0;top:0;width:11px;height:11px;border-style:solid;border-width:1px;border-color:#404040 #D4D0C8 #D4D0C8 #404040"></div></div><svg width="13" height="13" style="position:absolute;left:489px;top:320px" shape-rendering="crispEdges"><path d="M3 5h1v1h1v1h1V6h1V5h1V4h1V3h1v3H9v1H8v1H7v1H6v1H5V9H4V8H3z" fill="#000"/></svg><div class="t" style="left:507px;top:321px;color:#000;">Show Read Speed</div><div class="box" style="left:489px;top:338px;width:13px;height:13px;background:#D4D0C8;border-style:solid;border-width:1px;border-color:#808080 #FFFFFF #FFFFFF #808080"><div class="box" style="left:0;top:0;width:11px;height:11px;border-style:solid;border-width:1px;border-color:#404040 #D4D0C8 #D4D0C8 #404040"></div></div><svg width="13" height="13" style="position:absolute;left:489px;top:338px" shape-rendering="crispEdges"><path d="M3 5h1v1h1v1h1V6h1V5h1V4h1V3h1v3H9v1H8v1H7v1H6v1H5V9H4V8H3z" fill="#808080"/></svg><div class="t" style="left:508px;top:340px;color:#fff;">Show Write Speed</div><div class="t" style="left:507px;top:339px;color:#808080;">Show Write Speed</div><div class="box" style="left:482px;top:364px;width:139px;height:26px;border:1px solid #FFFFFF"></div><div class="box" style="left:481px;top:363px;width:139px;height:26px;border:1px solid #808080"></div><div class="t" style="left:489px;top:371px;color:#000;">Quality Score:</div><div class="t" style="right:29px;top:371px;color:#000080;text-align:right;">43</div><div class="box" style="left:482px;top:396px;width:139px;height:68px;border:1px solid #FFFFFF"></div><div class="box" style="left:481px;top:395px;width:139px;height:68px;border:1px solid #808080"></div><div class="t" style="left:489px;top:405px;color:#000;">Progress:</div><div class="t" style="right:29px;top:405px;color:#000080;text-align:right;">100 %</div><div class="t" style="left:489px;top:426px;color:#000;">Position:</div><div class="t" style="right:29px;top:426px;color:#000080;text-align:right;">3612 MB</div><div class="t" style="left:489px;top:445px;color:#000;">Speed:</div><div class="t" style="right:29px;top:445px;color:#000080;text-align:right;">14.98 X</div><div class="box" style="left:17px;top:396px;width:146px;height:69px;border:1px solid #FFFFFF"></div><div class="box" style="left:16px;top:395px;width:146px;height:69px;border:1px solid #808080"></div><div class="box" style="left:26px;top:390px;width:52px;height:12px;background:#D4D0C8"></div><div class="box" style="left:26px;top:392px;width:8px;height:8px;background:#00FFFF;border:1px solid #000"></div><div class="t" style="left:37px;top:390px;color:#000;letter-spacing:-0.7px">PI Errors</div><div class="t" style="left:23px;top:406px;color:#000;">Average:</div><div class="t" style="right:485px;top:406px;color:#000080;text-align:right;">117.65</div><div class="t" style="left:23px;top:426px;color:#000;">Maximum:</div><div class="t" style="right:485px;top:426px;color:#000080;text-align:right;">268</div><div class="t" style="left:23px;top:445px;color:#000;">Total:</div><div class="t" style="right:485px;top:445px;color:#000080;text-align:right;">1431216</div><div class="box" style="left:172px;top:396px;width:146px;height:69px;border:1px solid #FFFFFF"></div><div class="box" style="left:171px;top:395px;width:146px;height:69px;border:1px solid #808080"></div><div class="box" style="left:181px;top:390px;width:61px;height:12px;background:#D4D0C8"></div><div class="box" style="left:181px;top:392px;width:8px;height:8px;background:#FFFF00;border:1px solid #000"></div><div class="t" style="left:192px;top:390px;color:#000;letter-spacing:-0.65px">PI Failures</div><div class="t" style="left:179px;top:406px;color:#000;">Average:</div><div class="t" style="right:329px;top:406px;color:#000080;text-align:right;">1.06</div><div class="t" style="left:179px;top:426px;color:#000;">Maximum:</div><div class="t" style="right:329px;top:426px;color:#000080;text-align:right;">13</div><div class="t" style="left:179px;top:445px;color:#000;">Total:</div><div class="t" style="right:329px;top:445px;color:#000080;text-align:right;">49115</div><div class="box" style="left:326px;top:396px;width:146px;height:51px;border:1px solid #FFFFFF"></div><div class="box" style="left:325px;top:395px;width:146px;height:51px;border:1px solid #808080"></div><div class="box" style="left:335px;top:390px;width:34px;height:12px;background:#D4D0C8"></div><div class="box" style="left:335px;top:392px;width:8px;height:8px;background:#FF00FF;border:1px solid #000"></div><div class="t" style="left:345px;top:390px;color:#000;">Jitter</div><div class="t" style="left:333px;top:406px;color:#000;">Average:</div><div class="t" style="right:175px;top:406px;color:#000080;text-align:right;">-</div><div class="t" style="left:333px;top:426px;color:#000;">Maximum:</div><div class="t" style="right:175px;top:426px;color:#000080;text-align:right;">-</div><div class="t" style="left:334px;top:450px;color:#000;">PO Failures:</div><div class="t" style="right:175px;top:450px;color:#000080;text-align:right;">-</div></body></html>
